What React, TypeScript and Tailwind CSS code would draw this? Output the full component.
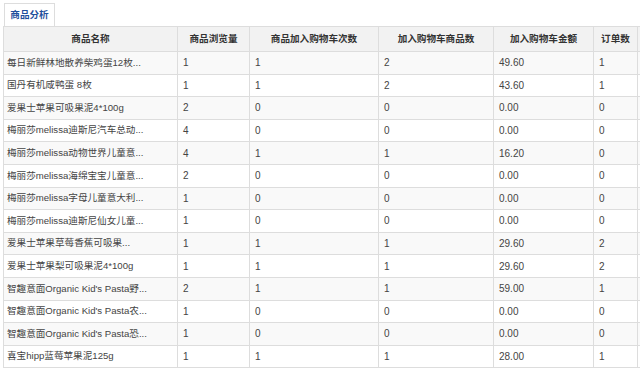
const columns = [
  { title: '商品名称', width: 'w-[174px]' },
  { title: '商品浏览量', width: 'w-[72px]' },
  { title: '商品加入购物车次数', width: 'w-[129px]' },
  { title: '加入购物车商品数', width: 'w-[115px]' },
  { title: '加入购物车金额', width: 'w-[100px]' },
  { title: '订单数', width: 'w-[44px]' },
  { title: '', width: 'w-[80px]' },
];

const rows: string[][] = [
  ['每日新鲜林地散养柴鸡蛋12枚...', '1', '1', '2', '49.60', '1'],
  ['国丹有机咸鸭蛋 8枚', '1', '1', '2', '43.60', '1'],
  ['爱果士苹果可吸果泥4*100g', '2', '0', '0', '0.00', '0'],
  ['梅丽莎melissa迪斯尼汽车总动...', '4', '0', '0', '0.00', '0'],
  ['梅丽莎melissa动物世界儿童意...', '4', '1', '1', '16.20', '0'],
  ['梅丽莎melissa海绵宝宝儿童意...', '2', '0', '0', '0.00', '0'],
  ['梅丽莎melissa字母儿童意大利...', '1', '0', '0', '0.00', '0'],
  ['梅丽莎melissa迪斯尼仙女儿童...', '1', '0', '0', '0.00', '0'],
  ['爱果士苹果草莓香蕉可吸果...', '1', '1', '1', '29.60', '2'],
  ['爱果士苹果梨可吸果泥4*100g', '1', '1', '1', '29.60', '2'],
  ["智趣意面Organic Kid's Pasta野...", '2', '1', '1', '59.00', '1'],
  ["智趣意面Organic Kid's Pasta农...", '1', '0', '0', '0.00', '0'],
  ["智趣意面Organic Kid's Pasta恐...", '1', '0', '0', '0.00', '0'],
  ['喜宝hipp蓝莓苹果泥125g', '1', '1', '1', '28.00', '1'],
];

export default function App() {
  return (
    <div
      className="w-[640px] h-[369px] overflow-hidden bg-white text-[9.6px] text-[#444]"
      style={{ fontFamily: '"Liberation Sans", "Noto Sans CJK SC", sans-serif' }}
    >
      <div className="pl-[4px] pt-[3px] flex">
        <div className="h-[23px] w-[51px] border border-b-0 border-[#ddd] bg-white text-[#1f4f9c] font-bold flex items-center justify-center leading-none">
          商品分析
        </div>
      </div>
      <table className="ml-[3px] border-collapse table-fixed w-[714px]">
        <thead>
          <tr className="bg-[#f2f2f2]">
            {columns.map((c, i) => (
              <th
                key={i}
                className={`${c.width} h-[25px] border border-[#ddd] font-bold text-center text-[#333] whitespace-nowrap p-0`}
              >
                {c.title}
              </th>
            ))}
          </tr>
        </thead>
        <tbody>
          {rows.map((r, i) => (
            <tr key={i} className={i % 2 === 0 ? 'bg-[#f9f9f9]' : 'bg-white'}>
              {r.map((cell, j) => (
                <td
                  key={j}
                  className={`h-[22.6px] border border-[#ddd] py-0 whitespace-nowrap overflow-hidden text-left ${
                    j === 0 ? 'pl-[3px] pr-[4px]' : 'px-[5px] text-[10px]'
                  }`}
                >
                  {cell}
                </td>
              ))}
              <td className="h-[22.6px] border border-[#ddd]"></td>
            </tr>
          ))}
        </tbody>
      </table>
    </div>
  );
}
